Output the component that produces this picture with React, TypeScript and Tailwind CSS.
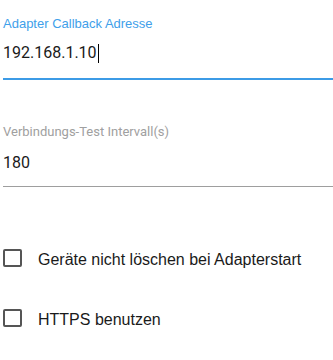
import React from 'react';

const CheckBox: React.FC<{ label: string }> = ({ label }) => (
    <div className="flex items-center h-[24px]">
        <div className="w-[19px] h-[18px] border-2 border-[#555555] rounded-[2px]" />
        <span className="ml-[16px] pt-[3px] text-[16px] text-[#1a1a1a] font-['Liberation_Sans',Arial,sans-serif]">{label}</span>
    </div>
);

export default function App() {
    return (
        <div className="w-[333px] h-[360px] bg-white pl-[3px] font-['Roboto',sans-serif]">
            {/* Adapter callback address, focused */}
            <div className="pt-[16px]">
                <div className="h-[16px] leading-[16px] text-[13px] text-[#40a0ea] font-['Liberation_Sans',Arial,sans-serif]">
                    Adapter Callback Adresse
                </div>
                <div className="mt-[9px] h-[24px] leading-[24px] text-[16px] text-[#1a1a1a] flex items-center">
                    <span>192.168.1.10</span>
                    <span className="w-[1px] h-[19px] bg-black ml-[1px]" />
                </div>
                <div className="mt-[13px] h-[2px] bg-[#3c9be6]" />
            </div>

            {/* Connection test interval */}
            <div className="pt-[44px]">
                <div className="h-[16px] leading-[16px] text-[13px] text-[#a0a0a0]">
                    Verbindungs-Test Intervall(s)
                </div>
                <div className="mt-[11px] h-[24px] leading-[24px] text-[16px] text-[#1a1a1a]">180</div>
                <div className="mt-[11px] h-[1px] bg-[#9e9e9e]" />
            </div>

            <div className="pt-[59px] flex flex-col gap-[36px]">
                <CheckBox label="Geräte nicht löschen bei Adapterstart" />
                <CheckBox label="HTTPS benutzen" />
            </div>
        </div>
    );
}
